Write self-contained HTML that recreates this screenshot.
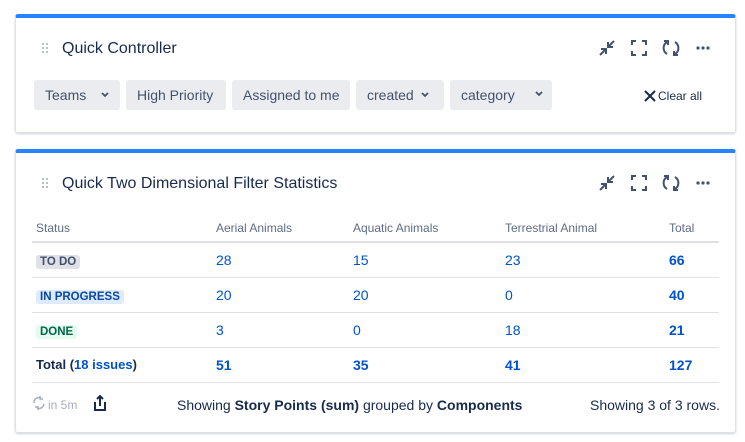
<!DOCTYPE html>
<html><head><style>
*{box-sizing:border-box;margin:0;padding:0}
body{width:745px;height:442px;background:#fff;font-family:"Liberation Sans",sans-serif;position:relative;overflow:hidden;color:#172b4d}
.card{position:absolute;left:15px;width:721px;border:1px solid #dfe1e6;border-top:4px solid #2684ff;border-radius:3px;box-shadow:0 1px 2px rgba(9,30,66,.2)}
.abs{position:absolute}
.title{font-size:16px;color:#172b4d}
.btn{position:absolute;top:80px;height:30px;background:#ebecf0;border-radius:3px;font-size:14px;color:#42526e;line-height:30px;padding-left:11px}
.t{position:absolute;font-size:14px}
.h{font-size:12px;color:#5e6c84}
.n{color:#0052cc;font-size:14px}
.b{font-weight:bold}
.line{position:absolute;left:32px;width:687px;height:1px;background:#dfe1e6}
.lz{font-size:11.5px;font-weight:bold;padding:1px 4px;border-radius:3px}
</style></head><body>
<div class="card" style="top:14px;height:119px"></div>
<div class="card" style="top:149px;height:284px"></div>

<div class="abs title" style="left:62px;top:40px">Quick Controller</div>
<div class="btn" style="left:34px;width:86px">Teams</div>
<div class="btn" style="left:126px;width:100px">High Priority</div>
<div class="btn" style="left:232px;width:118px">Assigned to me</div>
<div class="btn" style="left:356px;width:88px">created</div>
<div class="btn" style="left:450px;width:102px">category</div>
<div class="abs" style="left:658px;top:89px;font-size:12px;color:#172b4d">Clear all</div>

<svg class="abs" style="left:0;top:0;z-index:5" width="745" height="442">
<g fill="#a5adba"><circle cx="43" cy="44" r="1"/><circle cx="47" cy="44" r="1"/><circle cx="43" cy="48" r="1"/><circle cx="47" cy="48" r="1"/><circle cx="43" cy="52" r="1"/><circle cx="47" cy="52" r="1"/>
<circle cx="43" cy="179" r="1"/><circle cx="47" cy="179" r="1"/><circle cx="43" cy="183" r="1"/><circle cx="47" cy="183" r="1"/><circle cx="43" cy="187" r="1"/><circle cx="47" cy="187" r="1"/></g>
<g stroke="#42526e" stroke-width="2" fill="none">
<g id="ic"><path d="M600 55l6-6M601 49h5v5M614 41l-6 6M608 42v5h5"/>
<path d="M632 45v-4h4M642 41h4v4M646 51v4h-4M636 55h-4v-4"/>
<path d="M667 42a7 7 0 0 0 0 12M675 42a7 7 0 0 1 0 12M664 41h4v4M678 55h-4v-4"/></g>
<use href="#ic" y="135"/>
</g>
<g fill="#42526e"><circle cx="698" cy="48" r="1.6"/><circle cx="703" cy="48" r="1.6"/><circle cx="708" cy="48" r="1.6"/>
<circle cx="698" cy="183" r="1.6"/><circle cx="703" cy="183" r="1.6"/><circle cx="708" cy="183" r="1.6"/></g>
<g stroke="#42526e" stroke-width="1.8" fill="none">
<path d="M102 93l3 3 3-3M422 93l3 3 3-3M536 92l3 3 3-3"/></g>
<path d="M645 91l10 10M655 91l-10 10" stroke="#172b4d" stroke-width="2"/>
<path d="M34 403a5 5 0 0 1 7-5M44 404a5 5 0 0 1-7 4M40 396v3h3M38 410v-3h-3" stroke="#a5adba" stroke-width="1.4" fill="none"/>
<path d="M95 402v8h10v-8M100 406v-10M97 399l3-3 3 3" stroke="#172b4d" stroke-width="2" fill="none"/>
</svg>

<div class="abs title" style="left:62px;top:175px">Quick Two Dimensional Filter Statistics</div>

<div class="t h" style="left:36px;top:221px">Status</div>
<div class="t h" style="left:216px;top:221px">Aerial Animals</div>
<div class="t h" style="left:353px;top:221px">Aquatic Animals</div>
<div class="t h" style="left:505px;top:221px">Terrestrial Animal</div>
<div class="t h" style="left:669px;top:221px">Total</div>
<div class="line" style="top:241px;height:2px"></div>

<div class="t" style="left:36px;top:252px"><span class="lz" style="background:#dfe1e6;color:#42526e">TO DO</span></div>
<div class="t n" style="left:216px;top:252px">28</div><div class="t n" style="left:353px;top:252px">15</div><div class="t n" style="left:505px;top:252px">23</div><div class="t n b" style="left:669px;top:252px">66</div>
<div class="line" style="top:277px"></div>
<div class="t" style="left:36px;top:287px"><span class="lz" style="background:#deebff;color:#0747a6">IN PROGRESS</span></div>
<div class="t n" style="left:216px;top:287px">20</div><div class="t n" style="left:353px;top:287px">20</div><div class="t n" style="left:505px;top:287px">0</div><div class="t n b" style="left:669px;top:287px">40</div>
<div class="line" style="top:312px"></div>
<div class="t" style="left:36px;top:322px"><span class="lz" style="background:#e3fcef;color:#006644">DONE</span></div>
<div class="t n" style="left:216px;top:322px">3</div><div class="t n" style="left:353px;top:322px">0</div><div class="t n" style="left:505px;top:322px">18</div><div class="t n b" style="left:669px;top:322px">21</div>
<div class="line" style="top:347px"></div>
<div class="t b" style="left:36px;top:357px;font-size:13px">Total (<span style="color:#0052cc">18 issues</span>)</div>
<div class="t n b" style="left:216px;top:357px">51</div><div class="t n b" style="left:353px;top:357px">35</div><div class="t n b" style="left:505px;top:357px">41</div><div class="t n b" style="left:669px;top:357px">127</div>
<div class="line" style="top:382px"></div>

<div class="t" style="left:48px;top:398px;font-size:12px;color:#a5adba">in 5m</div>
<div class="t" style="left:177px;top:397px;font-size:14px">Showing <b>Story Points (sum)</b> grouped by <b>Components</b></div>
<div class="t" style="left:590px;top:397px;font-size:14px">Showing 3 of 3 rows.</div>
</body></html>
